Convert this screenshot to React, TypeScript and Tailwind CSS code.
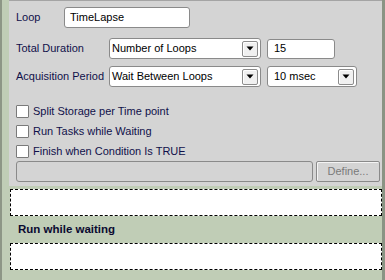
import React from 'react';

const font = { fontFamily: '"Liberation Sans", Arial, sans-serif' };

function Arrow() {
  return (
    <div className="flex h-[16px] w-[16px] items-center justify-center rounded-[2px] border border-[#8c8c8c] bg-[#f0f0f0] shadow-[inset_1px_1px_0_#ffffff]">
      <svg width="8" height="5" viewBox="0 0 8 5">
        <path d="M0.5 0.5h7L4 4.5z" fill="#000" />
      </svg>
    </div>
  );
}

function Select({ value, width, pad }: { value: string; width: string; pad: string }) {
  return (
    <div
      className={`flex h-[21px] ${width} ${pad} items-center justify-between rounded-[3px] border border-[#8a8a8a] bg-white pr-[2px] text-[11px] text-black`}
    >
      <span className="whitespace-nowrap">{value}</span>
      <Arrow />
    </div>
  );
}

function Check({ label }: { label: string }) {
  return (
    <div className="flex h-[20px] items-center gap-[4px]">
      <div className="h-[13px] w-[13px] rounded-[1px] border border-[#7a7a7a] bg-white" />
      <span className="whitespace-nowrap text-[11px] text-[#10104a]">{label}</span>
    </div>
  );
}

export default function App() {
  return (
    <div
      style={font}
      className="flex h-[280px] w-[385px] flex-col border-l-2 border-r-[3px] border-l-[#8d9686] border-r-[#8a9484] bg-[#c0cdb6]"
    >
      {/* Settings panel */}
      <div className="ml-[7px] h-[186px] border-t border-[#a4a4a4] bg-[#d4d4d4] pl-[7px] pt-[6px]">
        <div className="flex h-[21px] items-center">
          <span className="w-[48px] text-[11px] text-[#10104a]">Loop</span>
          <div className="flex h-[21px] w-[126px] items-center rounded-[3px] border border-[#8a8a8a] bg-white pl-[5px] text-[11px] text-black">
            TimeLapse
          </div>
        </div>

        <div className="mt-[10px] flex h-[21px] items-center">
          <span className="w-[93px] whitespace-nowrap text-[11px] text-[#10104a]">Total Duration</span>
          <Select value="Number of Loops" width="w-[152px]" pad="pl-[2px]" />
          <div className="ml-[6px] flex h-[20px] w-[68px] items-center rounded-[3px] border border-[#8a8a8a] bg-white pl-[6px] text-[11px] text-black">
            15
          </div>
        </div>

        <div className="mt-[7px] flex h-[21px] items-center">
          <span className="w-[93px] whitespace-nowrap text-[11px] text-[#10104a]">Acquisition Period</span>
          <Select value="Wait Between Loops" width="w-[152px]" pad="pl-[2px]" />
          <div className="ml-[6px]">
            <Select value="10 msec" width="w-[90px]" pad="pl-[6px]" />
          </div>
        </div>

        <div className="mt-[14px] flex flex-col">
          <Check label="Split Storage per Time point" />
          <Check label="Run Tasks while Waiting" />
          <Check label="Finish when Condition Is TRUE" />
        </div>

        <div className="flex h-[21px] items-center gap-[3px]">
          <div className="h-[21px] w-[297px] rounded-[3px] border border-[#8a8a8a] bg-[#d4d4d4]" />
          <div className="flex h-[21px] w-[64px] items-center justify-center rounded-[2px] border border-[#8a8a8a] text-[11px] text-[#7a7a7a] shadow-[inset_1px_1px_0_#f4f4f4]">
            Define...
          </div>
        </div>
      </div>

      {/* Task drop zones */}
      <div className="ml-[8px] mt-[3px] h-[27px] border border-dashed border-black bg-white" />
      <div className="flex h-[27px] items-center pl-[16px] text-[11.5px] font-bold text-[#0a0a30]">
        Run while waiting
      </div>
      <div className="ml-[8px] h-[27px] border border-dashed border-black bg-white" />
    </div>
  );
}
